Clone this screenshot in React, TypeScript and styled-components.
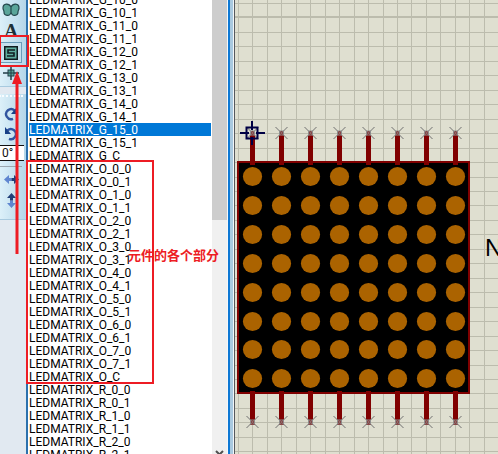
import React from 'react';
import styled, { createGlobalStyle } from 'styled-components';

const Global = createGlobalStyle`
  * { box-sizing: border-box; }
  html, body, #root { height: 100%; margin: 0; }
  body { overflow: hidden; background: #dfdfd0; font-family: Roboto, "Liberation Sans", Arial, sans-serif; }
`;

const Workspace = styled.main`
  position: relative;
  display: flex;
  height: 100vh;
  overflow: hidden;
`;

const Sidebar = styled.nav`
  flex: 0 0 26px;
  background: #e1e9f1;
`;

const ToolGroup = styled.div<{ $tall?: boolean }>`
  display: flex;
  flex-direction: column;
  align-items: center;
  width: 26px;
  height: ${(p) => (p.$tall ? 126 : 87)}px;
  padding-right: 4px;
  background: linear-gradient(90deg, #dcf0f9, #b4d6e9);
  border-bottom: 1px solid #a8cadf;
`;

const ToolButton = styled.button<{ $active?: boolean; $h: number }>`
  display: flex;
  align-items: center;
  justify-content: center;
  flex: 0 0 ${(p) => p.$h}px;
  width: 22px;
  padding: 0;
  background: ${(p) => (p.$active ? '#c5e0ee' : 'transparent')};
  border: ${(p) => (p.$active ? '1px solid #6a9cba' : '0')};
  border-left: 0;
`;

const Letter = styled.span`
  font: bold 19px/20px "Liberation Serif", serif;
  color: #1d3038;
`;

const Gap = styled.div`
  height: 7px;
`;

const Grip = styled.div`
  flex: 0 0 10px;
  width: 24px;
  margin-top: 1px;
  border-top: 2px dotted #f8fcff;
`;

const Angle = styled.input`
  flex: 0 0 16px;
  width: 24px;
  align-self: flex-start;
  padding: 0 0 0 2px;
  border: 1px solid #111;
  border-left: 0;
  border-right: 0;
  background: #fff;
  color: #111;
  font: 12px/14px Roboto, "Liberation Sans", sans-serif;
`;

const Rule = styled.hr`
  width: 22px;
  margin: 5px 0 2px;
  border: 0;
  border-top: 1px solid #9aa7b0;
`;

const Panel = styled.section`
  display: flex;
  flex: 0 0 204px;
  background: #fff;
  border-left: 2px solid #2c71ad;
  border-right: 2px solid #0d78d4;
  overflow: hidden;
`;

const List = styled.ul`
  flex: 1;
  margin: -7px 0 0;
  padding: 0 0 0 1px;
  list-style: none;
`;

const Item = styled.li<{ $selected?: boolean }>`
  height: 13px;
  font-size: 12px;
  line-height: 14px;
  white-space: nowrap;
  color: ${(p) => (p.$selected ? '#fff' : '#000')};
  background: ${(p) => (p.$selected ? '#0078d7' : 'transparent')};
`;

const Scrollbar = styled.div`
  display: flex;
  flex: 0 0 16px;
  flex-direction: column;
  align-items: center;
  justify-content: space-between;
  margin-left: 1px;
  background: #f0f0f0;
  border-right: 1px solid #f4f8fb;
`;

const Thumb = styled.div`
  width: 15px;
  height: 220px;
  background: #cdcdcd;
`;

const Splitter = styled.div`
  flex: 0 0 5px;
  background: #a9c9df;
  border-right: 1px solid #55585c;
  box-shadow: inset -1px 0 #f2f6f8;
`;

const Sheet = styled.div`
  flex: 1;
  overflow: hidden;
  background: #dfdfd0;
`;

const Frame = styled.div<{ $x: number; $y: number; $w: number; $h: number }>`
  position: absolute;
  left: ${(p) => p.$x}px;
  top: ${(p) => p.$y}px;
  width: ${(p) => p.$w}px;
  height: ${(p) => p.$h}px;
  border: 2px solid #ed1c24;
  pointer-events: none;
`;

const Note = styled.p`
  position: absolute;
  left: 128px;
  top: 246px;
  margin: 0;
  font: bold 13px/18px "Noto Sans CJK SC", sans-serif;
  color: #ed1c24;
  white-space: nowrap;
`;

const Arrow = styled.svg`
  position: absolute;
  left: 10px;
  top: 71px;
  pointer-events: none;
`;

const names: string[] = [];
for (let i = 10; i <= 15; i++) names.push(`G_${i}_0`, `G_${i}_1`);
names.push('G_C');
for (let i = 0; i <= 7; i++) names.push(`O_${i}_0`, `O_${i}_1`);
names.push('O_C');
for (let i = 0; i <= 2; i++) names.push(`R_${i}_0`, `R_${i}_1`);

const lines = (first: number, step: number, count: number) =>
  Array.from({ length: count }, (_, i) => Math.round(first + i * step));

const gridX = lines(3, 14.45, 60);
const gridY = lines(3, 14.46, 60);
const pins = lines(17, 29, 8);
const ledRows = lines(176, 28.9, 8);

const Cross = ({ x, y }: { x: number; y: number }) => (
  <g transform={`translate(${x} ${y})`}>
    <path d="M-6-6 6 6M6-6-6 6" stroke="#707070" fill="none" />
    <rect x="-2" y="-2" width="4" height="4" fill="#800000" stroke="#8d8d8d" />
    <path d="M-2-2 2 2M2-2-2 2" stroke="#909090" />
  </g>
);

const Schematic = () => (
  <svg width="100%" height="100%" role="img" aria-label="LED matrix">
    <g fill="#bcbcad" shapeRendering="crispEdges">
      {gridX.map((x) => <rect key={x} x={x} y="0" width="1" height="100%" />)}
      {gridY.map((y, i) => <rect key={y} x="0" y={i === 1 ? 16 : y} width="100%" height={i === 1 ? 2 : 1} />)}
    </g>
    <rect x="3" y="162" width="231" height="231" fill="#000" stroke="#800000" strokeWidth="2" />
    {pins.map((x) => (
      <g key={x}>
        <path d={`M${x + 0.5} 131V165M${x + 0.5} 391V425`} stroke="#800000" strokeWidth="5" />
        {ledRows.map((y) => <circle key={y} cx={x + 0.5} cy={y + 0.5} r="9.6" fill="#ab6300" />)}
        <Cross x={x + 0.5} y={133} />
        <Cross x={x + 0.5} y={422} />
      </g>
    ))}
    <path d="M17 121V130M17 137V145M5 133H14M21 133H30M11.500 127.500H22.500V138.500H11.500Z" fill="none" stroke="#000044" strokeWidth="2" />
    <text x="250" y="256" fontFamily="Liberation Sans, sans-serif" fontSize="24">N</text>
  </svg>
);

const Rotate = ({ flip }: { flip?: boolean }) => (
  <svg width="14" height="14" viewBox="0 0 14 14">
    <g transform={flip ? 'matrix(-1 0 0 1 14 0)' : undefined}>
      <path d="M10.500 3.500A5 5 0 1 0 9 11.800" fill="none" stroke="#3155a0" strokeWidth="2.400" />
      <path d="M13 0V7H7Z" fill="#173f87" />
    </g>
  </svg>
);

const Mirror = ({ vertical }: { vertical?: boolean }) => (
  <svg width="17" height="17" viewBox="0 0 17 17">
    <g transform={vertical ? 'rotate(-90 8.5 8.5)' : undefined}>
      <path d="M1 8.500 6 4V7H8.500V10H6V13Z" fill="#5f86d0" />
      <path d="M16 8.500 11 4V7H8.500V10H11V13Z" fill="#213f78" />
    </g>
  </svg>
);

export default function App() {
  return (
    <Workspace>
      <Global />
      <Sidebar aria-label="Tools">
        <ToolGroup>
          <ToolButton $h={19} aria-label="Component">
            <svg width="18" height="14" viewBox="0 0 18 14">
              <path d="M9 4C7 0 1 0 1 5C1 7 2 7 2 9C2 13 8 14 9 9C10 14 16 13 16 9C16 7 17 7 17 5C17 0 11 0 9 4ZM9 4V9" fill="#5aa59a" stroke="#24484d" strokeWidth="1.200" />
            </svg>
          </ToolButton>
          <ToolButton $h={23} aria-label="Text"><Letter>A</Letter></ToolButton>
          <ToolButton $h={21} $active aria-label="Symbol">
            <svg width="14" height="14" viewBox="0 0 14 14">
              <rect x="0.750" y="0.750" width="12.500" height="12.500" fill="#5fae9f" stroke="#101c20" strokeWidth="1.500" />
              <path d="M11 4H4V7H10V10H3" fill="none" stroke="#101c20" strokeWidth="1.600" />
            </svg>
          </ToolButton>
          <ToolButton $h={20} aria-label="Marker">
            <svg width="16" height="14" viewBox="0 0 16 14">
              <path d="M0 7H16M8 0V14" stroke="#223e48" strokeWidth="1.500" />
              <rect x="5" y="4" width="6" height="6" fill="#5aa59a" stroke="#223e48" />
              <path d="M5 7H11M8 4V10" stroke="#223e48" />
            </svg>
          </ToolButton>
        </ToolGroup>
        <Gap />
        <ToolGroup $tall>
          <Grip />
          <ToolButton $h={18} aria-label="Rotate clockwise"><Rotate /></ToolButton>
          <ToolButton $h={22} aria-label="Rotate anticlockwise"><Rotate flip /></ToolButton>
          <Angle aria-label="Rotation angle" defaultValue="0°" />
          <Rule />
          <ToolButton $h={20} aria-label="Mirror horizontally"><Mirror /></ToolButton>
          <ToolButton $h={22} aria-label="Mirror vertically"><Mirror vertical /></ToolButton>
        </ToolGroup>
      </Sidebar>
      <Panel>
        <List>
          {names.map((n) => <Item key={n} $selected={n === 'G_15_0'}>LEDMATRIX_{n}</Item>)}
        </List>
        <Scrollbar>
          <Thumb />
          <svg width="9" height="4" viewBox="0 0 9 4"><path d="M1 1 4.500 4.500 8 1" fill="none" stroke="#505050" strokeWidth="2" /></svg>
        </Scrollbar>
      </Panel>
      <Splitter />
      <Sheet><Schematic /></Sheet>
      <Frame $x={-1} $y={35} $w={30} $h={32} />
      <Frame $x={26} $y={160} $w={128} $h={224} />
      <Arrow width="14" height="184" viewBox="0 0 14 184">
        <path d="M7 10V183" stroke="#ed1c24" strokeWidth="3" />
        <path d="M7 0 12 13H2Z" fill="#ed1c24" />
      </Arrow>
      <Note>元件的各个部分</Note>
    </Workspace>
  );
}
